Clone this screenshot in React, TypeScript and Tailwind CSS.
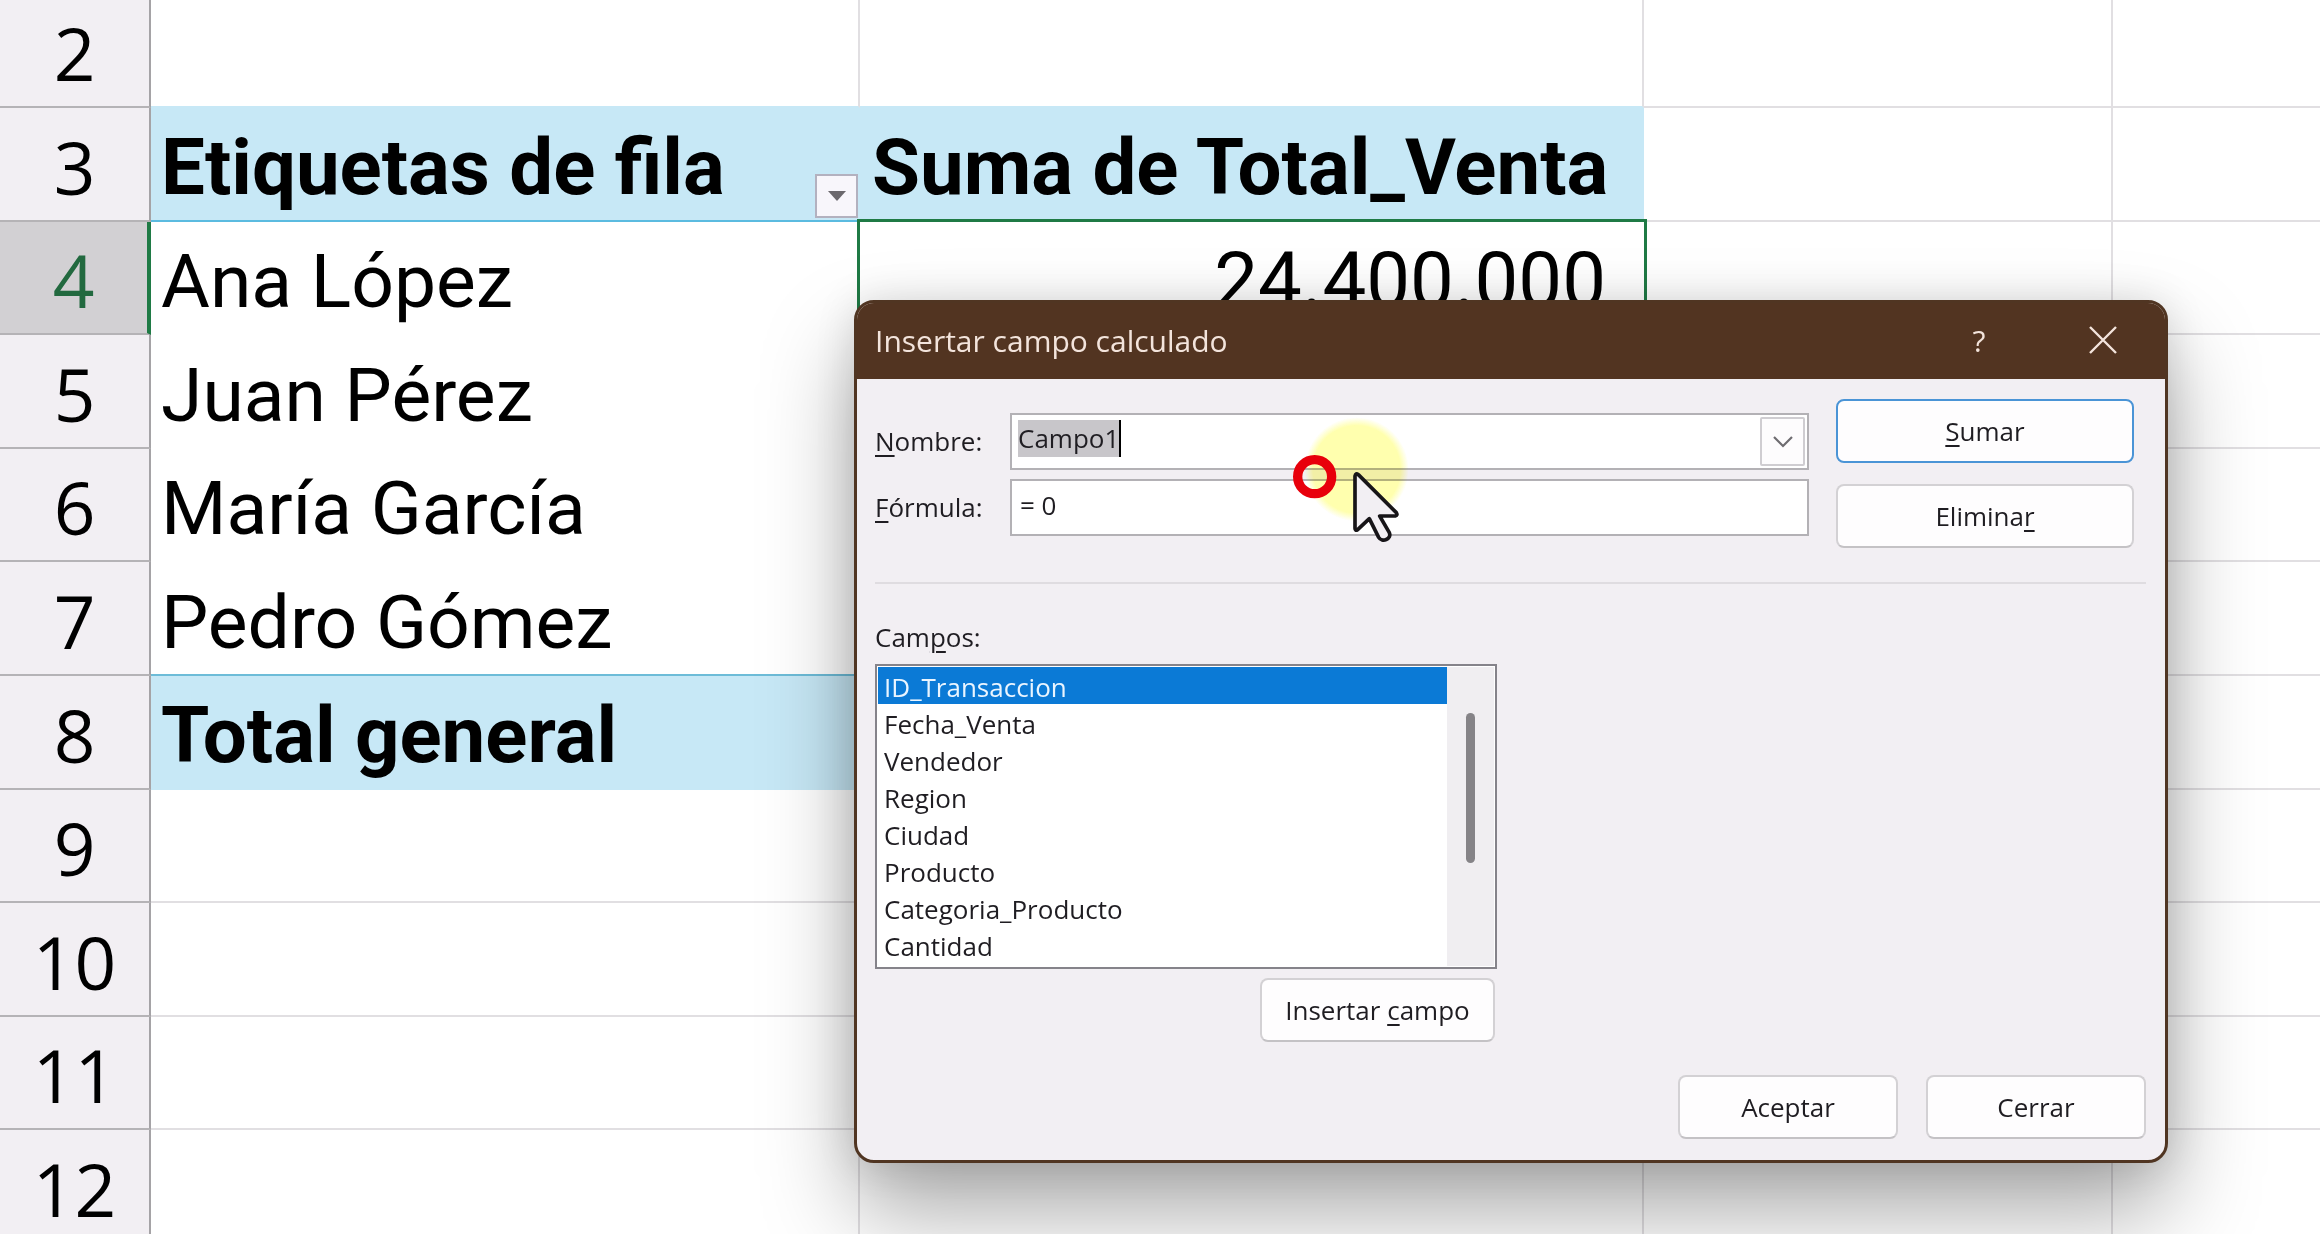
import React from "react";
import clsx from "clsx";

type SheetRow = {
    num: number;
    label?: string;
    value?: string;
    height: string;
    kind?: "header" | "body" | "total";
};

const rows: SheetRow[] = [
    { num: 2, height: "h-[108px]" },
    { num: 3, height: "h-[114px]", kind: "header", label: "Etiquetas de fila", value: "Suma de Total_Venta" },
    { num: 4, height: "h-[113px]", kind: "body", label: "Ana López", value: "24.400.000" },
    { num: 5, height: "h-[114px]", kind: "body", label: "Juan Pérez" },
    { num: 6, height: "h-[113px]", kind: "body", label: "María García" },
    { num: 7, height: "h-[114px]", kind: "body", label: "Pedro Gómez" },
    { num: 8, height: "h-[114px]", kind: "total", label: "Total general" },
    { num: 9, height: "h-[113px]" },
    { num: 10, height: "h-[114px]" },
    { num: 11, height: "h-[113px]" },
    { num: 12, height: "h-[114px]" },
];

const fields = [
    "ID_Transaccion",
    "Fecha_Venta",
    "Vendedor",
    "Region",
    "Ciudad",
    "Producto",
    "Categoria_Producto",
    "Cantidad",
];

const SELECTED_ROW = 4;

const FilterButton = () => (
    <button
        type="button"
        aria-label="Filtrar etiquetas"
        className="mr-[2px] mb-[2px] flex h-11 w-[43px] shrink-0 items-center justify-center border-2 border-[#b3b1bf] bg-[#f8f6fb]"
    >
        <svg viewBox="0 0 18 10" className="h-[10px] w-[18px]">
            <path d="M0 0h18L9 10z" fill="#6b686d" />
        </svg>
    </button>
);

const Sheet = () => (
    <table className="w-full table-fixed border-separate border-spacing-0 font-[Roboto,sans-serif] text-[75px] leading-[88px] text-black">
        <colgroup>
            <col className="w-[151px]" />
            <col className="w-[709px]" />
            <col className="w-[784px]" />
            <col className="w-[469px]" />
            <col />
        </colgroup>
        <tbody>
            {rows.map((row) => {
                const selected = row.num === SELECTED_ROW;
                const filled = row.kind === "header" || row.kind === "total";

                return (
                    <tr key={row.num} className={row.height}>
                        <th
                            scope="row"
                            className={clsx(
                                "border-b-2 p-0 pb-[9px] text-center align-bottom font-['Open_Sans',sans-serif] text-[73px] font-normal",
                                selected
                                    ? "border-r-4 border-b-[#b5b3b6] border-r-[#1f7a45] bg-[#d2d0d3] text-[#22693f]"
                                    : "border-r-2 border-b-[#b5b3b6] border-r-[#a5a3a6] bg-[#f2eff3]"
                            )}
                        >
                            {row.num}
                        </th>

                        {/* Row labels */}
                        <td
                            className={clsx(
                                "p-0 pl-[10px] align-bottom whitespace-nowrap",
                                filled && "bg-[#c7e8f6] text-[78px] font-bold",
                                row.kind === "header" && "border-b-2 border-[#5bbbe0]",
                                row.num === 7 && "border-b-2 border-[#6dbcd8]",
                                !row.kind && "border-b-2 border-r-2 border-[#e1dfe2]",
                                row.num === 2 && "border-b-[#c7e8f6]"
                            )}
                        >
                            <div className="flex items-end justify-between">
                                <span className={row.kind === "header" || row.num === 7 ? "pb-[8px]" : "pb-[10px]"}>
                                    {row.label}
                                </span>
                                {row.kind === "header" && <FilterButton />}
                            </div>
                        </td>

                        {/* Values */}
                        <td
                            className={clsx(
                                "p-0 pr-[38px] pb-[10px] pl-[12px] align-bottom whitespace-nowrap",
                                filled && "bg-[#c7e8f6] text-[78px] font-bold",
                                row.kind === "body" && "text-right text-[78px]",
                                !row.kind && "border-b-2 border-r-2 border-[#e1dfe2]",
                                row.num === 2 && "border-b-[#c7e8f6]",
                                selected && "outline-[3px] outline-[#1f7a45]"
                            )}
                        >
                            {row.value}
                        </td>
                        <td className="border-r-2 border-b-2 border-[#e1dfe2] p-0" />
                        <td className="border-b-2 border-[#e1dfe2] p-0" />
                    </tr>
                );
            })}
        </tbody>
    </table>
);

type DialogButtonProps = {
    children: React.ReactNode;
    className?: string;
    primary?: boolean;
};

const DialogButton: React.FC<DialogButtonProps> = ({ children, className, primary }) => (
    <button
        type="button"
        className={clsx(
            "h-16 rounded-lg border-2 bg-[#fefdfe] text-center",
            primary ? "border-[#4a94d6]" : "border-[#d3d1d4] border-b-[#c4c2c5]",
            className
        )}
    >
        {children}
    </button>
);

const Key = ({ children }: { children: React.ReactNode }) => (
    <span className="underline decoration-2 underline-offset-4">{children}</span>
);

const CalculatedFieldDialog = () => (
    <section
        role="dialog"
        aria-labelledby="dialog-title"
        className="absolute top-[300px] left-[854px] w-[1314px] overflow-hidden rounded-[20px] border-[3px] border-[#503522] bg-[#f2eff3] font-['Open_Sans',sans-serif] text-[26px] leading-[37px] text-[#1f1d22] shadow-[0_48px_90px_rgba(0,0,0,0.34),0_0_40px_rgba(0,0,0,0.12)]"
    >
        {/* Title bar */}
        <header className="flex h-[76px] items-center bg-[#523421] pb-[2px] pl-[18px] text-[30px] text-[#f3e4dc]">
            <h1 id="dialog-title" className="flex-1">Insertar campo calculado</h1>
            <button type="button" aria-label="Ayuda" className="w-[124px] text-center">?</button>
            <button type="button" aria-label="Cerrar ventana" className="flex w-[124px] justify-center">
                <svg viewBox="0 0 28 28" className="h-7 w-7" fill="none" stroke="#f3e4dc" strokeWidth="2.4">
                    <path d="M1 1l26 26M27 1L1 27" />
                </svg>
            </button>
        </header>

        <div className="pt-5 pr-[19px] pb-[21px] pl-[18px]">
            <div className="flex gap-[27px] pr-3">
                {/* Name and formula */}
                <div className="grid flex-1 grid-cols-[135px_1fr] content-start items-center gap-y-[9px] pt-[14px]">
                    <label htmlFor="nombre"><Key>N</Key>ombre:</label>
                    <div className="flex h-[57px] items-center justify-between border-2 border-[#b3b1b5] bg-white pr-[2px] pl-[6px]">
                        <input
                            id="nombre"
                            defaultValue="Campo1"
                            className="mb-[6px] h-[37px] field-sizing-content border-r-2 border-black bg-[#c8c6ca] p-0 outline-none"
                        />
                        <button
                            type="button"
                            aria-label="Mostrar campos calculados"
                            className="flex h-[49px] w-[45px] items-center justify-center rounded-xs border-2 border-[#cfcdd1] bg-[#fdfcfd]"
                        >
                            <svg viewBox="0 0 20 12" className="h-3 w-5" fill="none" stroke="#6e6c70" strokeWidth="2.2">
                                <path d="M1 1l9 9 9-9" />
                            </svg>
                        </button>
                    </div>

                    <label htmlFor="formula"><Key>F</Key>órmula:</label>
                    <input
                        id="formula"
                        defaultValue="= 0"
                        className="h-[57px] w-full border-2 border-[#b3b1b5] bg-white px-2 pb-[6px] outline-none"
                    />
                </div>

                <div className="flex w-[298px] flex-col gap-[21px]">
                    <DialogButton primary><Key>S</Key>umar</DialogButton>
                    <DialogButton>Elimina<Key>r</Key></DialogButton>
                </div>
            </div>

            <hr className="mt-[34px] border-t-2 border-[#dfdce0]" />

            {/* Field list */}
            <div className="mt-[35px] flex w-[622px] flex-col">
                <label htmlFor="campos">Cam<Key>p</Key>os:</label>
                <div className="mt-[8px] flex h-[305px] border-2 border-[#85838a] bg-white p-px">
                    <select
                        id="campos"
                        size={8}
                        defaultValue={fields[0]}
                        className="h-full flex-1 overflow-hidden bg-white p-0 outline-none [scrollbar-width:none]"
                    >
                        {fields.map((field) => (
                            <option
                                key={field}
                                value={field}
                                className="h-[37px] p-0 pt-[2px] pl-[6px] text-[#1f1d22] checked:bg-[linear-gradient(#0b7ad6,#0b7ad6)] checked:[-webkit-text-fill-color:#eaf5ff]"
                            >
                                {field}
                            </option>
                        ))}
                    </select>
                    <div className="flex w-[47px] justify-center bg-[#f0eef1] pt-[46px]">
                        <div className="h-[150px] w-[9px] rounded-full bg-[#858387]" />
                    </div>
                </div>
                <DialogButton className="mt-[9px] mr-[2px] w-[235px] self-end">
                    Insertar <Key>c</Key>ampo
                </DialogButton>
            </div>

            <footer className="mt-[33px] flex justify-end gap-[28px]">
                <DialogButton className="w-[220px]">Aceptar</DialogButton>
                <DialogButton className="w-[220px]">Cerrar</DialogButton>
            </footer>
        </div>
    </section>
);

/* Mouse pointer with its highlight halo and the click ring */
const Pointer = () => (
    <>
        <svg
            viewBox="0 0 600 480"
            className="pointer-events-none absolute top-[400px] left-[1240px] h-40 w-[200px] mix-blend-multiply"
        >
            <defs>
                <radialGradient id="halo">
                    <stop offset="0.84" stopColor="#ffffae" />
                    <stop offset="1" stopColor="#ffffae" stopOpacity="0" />
                </radialGradient>
            </defs>
            <circle cx="350" cy="208" r="156" fill="url(#halo)" />
        </svg>
        <svg
            viewBox="0 0 600 480"
            className="pointer-events-none absolute top-[400px] left-[1240px] h-40 w-[200px]"
        >
            <circle cx="224" cy="230" r="51" fill="none" stroke="#e8000b" strokeWidth="28" />
            <path
                d="M345 228v157q0 9 8 4l35-33 28 56c10 17 40 5 32-14l-29-50h47q8-2 3-10L355 224q-8-6-10 4z"
                fill="#f2eff3"
                stroke="#171518"
                strokeWidth="11"
                strokeLinejoin="round"
            />
        </svg>
    </>
);

export default function App() {
    return (
        <main className="relative h-screen overflow-hidden bg-white">
            <Sheet />
            <CalculatedFieldDialog />
            <Pointer />
        </main>
    );
}
